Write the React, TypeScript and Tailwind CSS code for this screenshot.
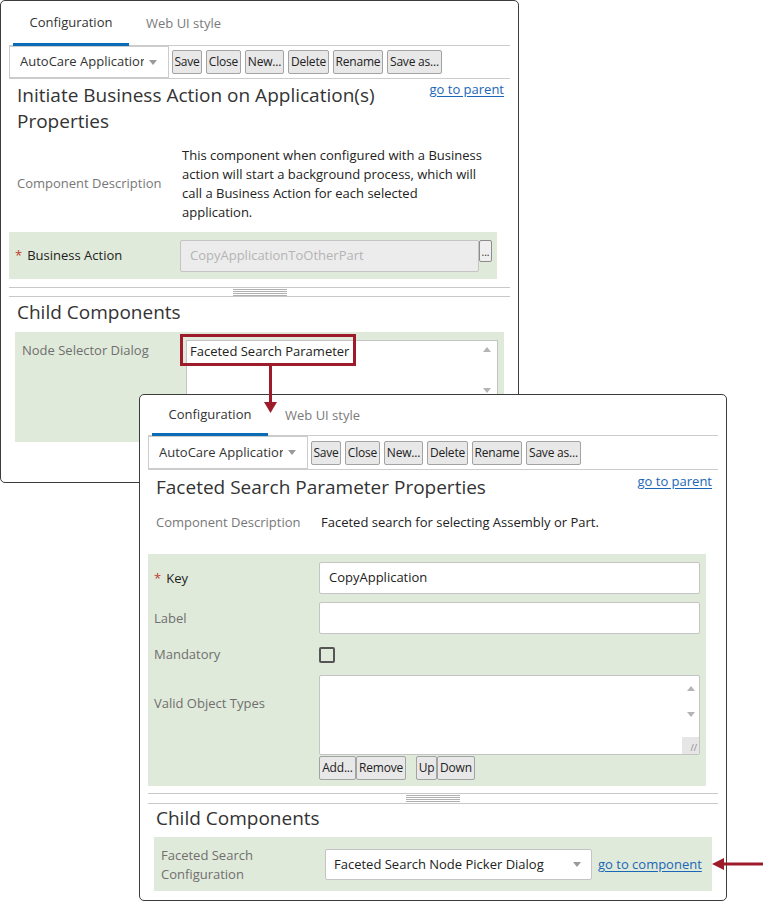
import React from 'react';

const GREEN = 'bg-[#e0eada]';

function Caret() {
  return <span className="w-0 h-0 border-l-[4px] border-r-[4px] border-t-[5px] border-l-transparent border-r-transparent border-t-[#9a9a9a]" />;
}

function ScrollArrows() {
  return (
    <div className="absolute right-[6px] top-[6px] bottom-[6px] flex flex-col justify-between items-center">
      <span className="w-0 h-0 border-l-[4px] border-r-[4px] border-b-[5px] border-l-transparent border-r-transparent border-b-[#b4b4b4]" />
      <span className="w-0 h-0 border-l-[4px] border-r-[4px] border-t-[5px] border-l-transparent border-r-transparent border-t-[#b4b4b4]" />
    </div>
  );
}

function Btn({ children, w }: { children: React.ReactNode; w: string }) {
  return (
    <button className={`${w} h-[24px] shrink-0 border border-[#a3a3a3] rounded-[2px] bg-[#e8e8e8] text-[12px] tracking-[-0.2px] leading-none text-[#222] whitespace-nowrap overflow-hidden`}>
      {children}
    </button>
  );
}

function Tabs({ h }: { h: string }) {
  return (
    <div className={`flex ${h} border-b border-[#cccccc]`}>
      <div className="ml-[4px] w-[116px] flex items-center justify-center pt-[2px] border-b-[3px] border-[#0b6cb5] -mb-px text-[13px] text-[#333]">
        Configuration
      </div>
      <div className="flex items-center pl-[17px] pt-[2px] text-[13px] text-[#7a7a7a]">Web UI style</div>
    </div>
  );
}

function Toolbar({ h }: { h: string }) {
  return (
    <div className={`flex items-center ${h} border-b border-[#cccccc]`}>
      <div className="w-[160px] h-full border border-[#cccccc] flex items-center pl-[10px]">
        <span className="w-[124px] overflow-hidden whitespace-nowrap text-[13px] text-[#333]">AutoCare Application</span>
        <span className="ml-[5px] flex"><Caret /></span>
      </div>
      <div className="flex gap-[4px] ml-[3px]">
        <Btn w="w-[30px]">Save</Btn>
        <Btn w="w-[35px]">Close</Btn>
        <Btn w="w-[39px]">New...</Btn>
        <Btn w="w-[41px]">Delete</Btn>
        <Btn w="w-[50px]">Rename</Btn>
        <Btn w="w-[55px]">Save as...</Btn>
      </div>
    </div>
  );
}

function Splitter({ h }: { h: string }) {
  return (
    <div className={`${h} border-t border-b border-[#c8c8c8] flex items-center justify-center`}>
      <div className="w-[54px] flex flex-col gap-px">
        <div className="h-px bg-[#b0b0b0]" />
        <div className="h-px bg-[#b0b0b0]" />
        <div className="h-px bg-[#b0b0b0]" />
        <div className="h-px bg-[#b0b0b0]" />
      </div>
    </div>
  );
}

function Link({ children }: { children: React.ReactNode }) {
  return <a className="block text-[13px] leading-[18px] text-[#1a66b8] underline underline-offset-2 whitespace-nowrap cursor-pointer">{children}</a>;
}

function Star() {
  return <span className="text-[#c0392b] mr-[5px]">*</span>;
}

function FirstWindow() {
  return (
    <div className="w-[519px] h-[483px] border border-[#3c3c3c] rounded-[5px] bg-white px-2 overflow-hidden">
      <Tabs h="h-[45px]" />
      <Toolbar h="h-[33px]" />

      <div className="flex justify-between pl-2 pr-[6px]">
        <h2 className="mt-[3px] text-[19px] leading-[26px] text-[#333] font-normal">
          Initiate Business Action on Application(s)
          <br />
          Properties
        </h2>
        <div className="mt-[1px] flex"><Link>go to parent</Link></div>
      </div>

      <div className="flex items-center mt-[12px]">
        <div className="w-[173px] pl-2 text-[13px] text-[#777]">Component Description</div>
        <div className="text-[13px] leading-[19px] text-[#222]">
          <div>This component when configured with a Business</div>
          <div>action will start a background process, which will</div>
          <div>call a Business Action for each selected</div>
          <div>application.</div>
        </div>
      </div>

      <div className={`${GREEN} mt-[10px] mr-[13px] h-[47px] flex items-center`}>
        <div className="w-[171px] pl-[6px] text-[13px] text-[#222]"><Star />Business Action</div>
        <div className="h-[32px] w-[299px] border border-[#c4c4c4] bg-[#ececec] rounded-[2px] flex items-center pl-[9px] text-[13px] text-[#b4b4b4]">
          CopyApplicationToOtherPart
        </div>
        <div className="self-start mt-[8px] w-[13px] h-[22px] border border-[#8c8c8c] rounded-[2px] bg-[#efefef] text-[10px] leading-[22px] text-center text-[#222]">...</div>
      </div>

      <div className="mt-[8px]"><Splitter h="h-[10px]" /></div>

      <h3 className="mt-[2px] pl-2 text-[19px] leading-[26px] text-[#333]">Child Components</h3>

      <div className={`${GREEN} mt-[7px] mx-[6px] h-[110px] flex items-start`}>
        <div className="w-[171px] pl-[7px] pt-[9px] text-[13px] leading-[18px] text-[#6f6f6f]">Node Selector Dialog</div>
        <div className="relative mt-[8px] w-[312px] h-[60px] border border-[#c4c4c4] bg-white">
          <div className="pl-[3px] pt-[1px] text-[13px] leading-[19px] text-[#222]">Faceted Search Parameter</div>
          <ScrollArrows />
        </div>
      </div>
    </div>
  );
}

function SecondWindow() {
  return (
    <div className="absolute left-[139px] top-[394px] w-[588px] h-[507px] border border-[#3c3c3c] rounded-[5px] bg-white px-2 overflow-hidden">
      <Tabs h="h-[41px]" />
      <Toolbar h="h-[34px]" />

      <div className="flex justify-between pl-2 pr-[6px]">
        <h2 className="mt-[4px] text-[19px] leading-[26px] text-[#333] font-normal">Faceted Search Parameter Properties</h2>
        <div className="mt-[2px] flex"><Link>go to parent</Link></div>
      </div>

      <div className="flex items-center mt-[13px] h-[19px]">
        <div className="w-[173px] pl-2 text-[13px] text-[#777]">Component Description</div>
        <div className="text-[13px] leading-[19px] text-[#222]">Faceted search for selecting Assembly or Part.</div>
      </div>

      <div className={`${GREEN} mt-[22px] mr-[12px] pt-[8px] pb-[6px]`}>
        <div className="flex items-center">
          <div className="w-[171px] pl-[6px] pt-[2px] text-[13px] text-[#222]"><Star />Key</div>
          <div className="h-[32px] w-[381px] border border-[#c4c4c4] bg-white rounded-[2px] flex items-center pl-[9px] text-[13px] text-[#222]">CopyApplication</div>
        </div>
        <div className="flex items-center mt-[8px]">
          <div className="w-[171px] pl-[6px] pt-[2px] text-[13px] text-[#6f6f6f]">Label</div>
          <div className="h-[32px] w-[381px] border border-[#c4c4c4] bg-white rounded-[2px]" />
        </div>
        <div className="flex items-center h-[41px]">
          <div className="w-[171px] pl-[6px] text-[13px] text-[#6f6f6f]">Mandatory</div>
          <div className="w-[16px] h-[16px] border-2 border-[#555] rounded-[2px]" />
        </div>
        <div className="flex items-start">
          <div className="w-[171px] pl-[6px] mt-[19px] text-[13px] leading-[19px] text-[#6f6f6f]">Valid Object Types</div>
          <div>
            <div className="relative w-[381px] h-[80px] border border-[#c4c4c4] bg-white rounded-[2px]">
              <div className="absolute right-0 top-0 bottom-0 w-[17px] flex flex-col items-center justify-between pt-[10px]">
                <span className="w-0 h-0 border-l-[4px] border-r-[4px] border-b-[5px] border-l-transparent border-r-transparent border-b-[#b4b4b4]" />
                <span className="w-0 h-0 border-l-[4px] border-r-[4px] border-t-[5px] border-l-transparent border-r-transparent border-t-[#b4b4b4]" />
                <span className="w-full h-[17px] bg-[#e6e6e6] flex items-end justify-end pr-[2px] pb-[2px] text-[9px] leading-none text-[#888]">//</span>
              </div>
            </div>
            <div className="flex mt-px">
              <Btn w="w-[37px]">Add...</Btn>
              <Btn w="w-[50px]">Remove</Btn>
              <span className="w-[10px]" />
              <Btn w="w-[21px]">Up</Btn>
              <Btn w="w-[38px]">Down</Btn>
            </div>
          </div>
        </div>
      </div>

      <div className="mt-[7px]"><Splitter h="h-[11px]" /></div>

      <h3 className="mt-[1px] pl-2 text-[19px] leading-[26px] text-[#333]">Child Components</h3>

      <div className={`${GREEN} mt-[6px] mx-[6px] h-[54px] flex items-start pt-[9px]`}>
        <div className="w-[171px] pl-[7px] text-[13px] leading-[19px] text-[#6f6f6f]">
          Faceted Search
          <br />
          Configuration
        </div>
        <div className="mt-[3px] w-[267px] h-[31px] border border-[#c4c4c4] bg-white rounded-[2px] flex items-center justify-between pl-[8px] pr-[10px] text-[13px] text-[#222]">
          Faceted Search Node Picker Dialog
          <Caret />
        </div>
        <div className="ml-[6px] mt-[9px] flex"><Link>go to component</Link></div>
      </div>
    </div>
  );
}

export default function App() {
  return (
    <div className="relative w-[763px] h-[902px] bg-white overflow-hidden font-['Open_Sans',sans-serif]">
      <FirstWindow />

      {/* highlight around the selected child */}
      <div className="absolute left-[180px] top-[334px] w-[176px] h-[32px] border-[3px] border-[#9d1b2b]" />

      <SecondWindow />

      {/* connector arrows */}
      <svg className="absolute left-0 top-0" width="763" height="902" viewBox="0 0 763 902">
        <line x1="270.5" y1="366" x2="270.5" y2="404" stroke="#9d1b2b" strokeWidth="3" />
        <polygon points="264,402 277,402 270.5,413" fill="#9d1b2b" />
        <line x1="763" y1="864" x2="722" y2="864" stroke="#9d1b2b" strokeWidth="3" />
        <polygon points="724,858 724,870 712,864" fill="#9d1b2b" />
      </svg>
    </div>
  );
}
